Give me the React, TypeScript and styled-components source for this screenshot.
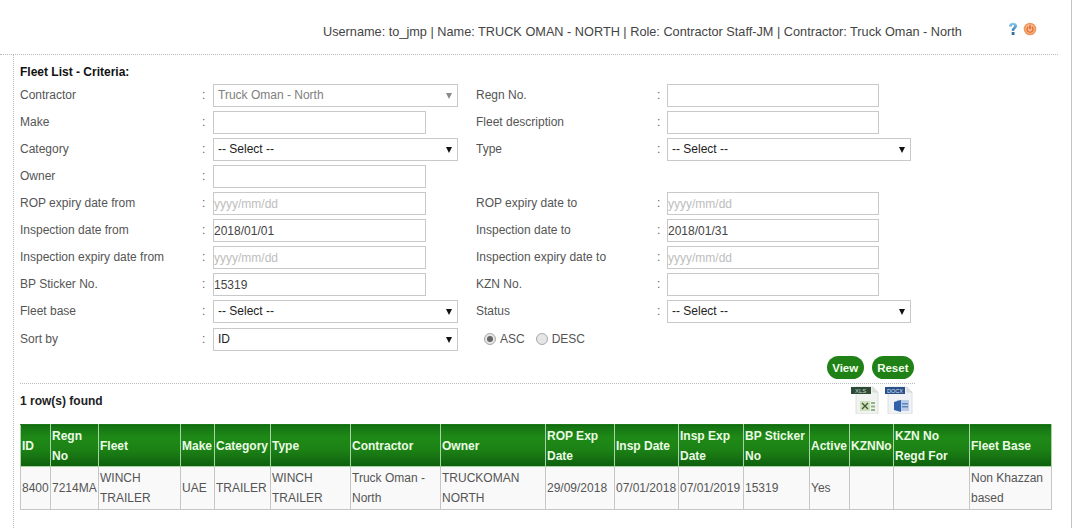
import React from 'react';
import styled, { createGlobalStyle } from 'styled-components';

const GlobalStyle = createGlobalStyle`
  html, body {
    margin: 0;
    padding: 0;
    background: #fff;
    font-family: 'Liberation Sans', Arial, sans-serif;
    font-size: 12px;
    overflow: hidden;
  }
`;

const Page = styled.div`
  width: 1071px;
  height: 528px;
  border-right: 1px solid #c4c4c4;
  overflow: hidden;
`;

const TopBar = styled.header`
  display: flex;
  align-items: center;
  height: 55px;
  width: 1058px;
  padding: 8px 0 0 323px;
  box-sizing: border-box;
  border-bottom: 1px dotted #bbb;
  color: #444;
  font-size: 12.72px;
`;

const UserInfo = styled.div`
  width: 684px;
  white-space: nowrap;
`;

const TopIcons = styled.div`
  display: flex;
  align-items: center;
  gap: 4px;
  margin-top: -4px;
`;

const Content = styled.main`
  margin-left: 13px;
  padding: 10px 0 0 6px;
  border-left: 1px dotted #bbb;
  height: 473px;
  box-sizing: border-box;
`;

const Heading = styled.h3`
  margin: 0;
  height: 16px;
  line-height: 15px;
  font-size: 12px;
  font-weight: bold;
  color: #111;
`;

const Criteria = styled.div`
  display: grid;
  grid-template-columns: 182px 11px 263px 181px 10px 1fr;
  grid-template-rows: repeat(9, 27px) 29px;
  align-items: center;
  width: 960px;
`;

const Label = styled.label`
  color: #555;
  font-size: 12px;
`;

const Colon = styled.span`
  color: #666;
`;

const TextInput = styled.input<{ $wide?: boolean }>`
  display: block;
  box-sizing: border-box;
  width: ${(p) => (p.$wide ? 212 : 213)}px;
  height: 23px;
  margin-top: 2px;
  padding: 0;
  border: 1px solid #c9c9c9;
  border-radius: 0;
  background: #fff;
  outline: none;
  color: #444;
  font: 12px 'Liberation Sans', Arial, sans-serif;

  &::placeholder {
    color: #bdbdbd;
  }
`;

const SelectWrap = styled.div<{ $muted?: boolean; $right?: boolean }>`
  position: relative;
  width: ${(p) => (p.$right ? 244 : 245)}px;
  height: 23px;
  margin-top: 2px;

  &::after {
    content: '';
    position: absolute;
    top: 9px;
    right: 6px;
    border-style: solid;
    border-width: 6px 3px 0 3px;
    border-color: ${(p) => (p.$muted ? '#8a8a8a' : '#111')} transparent transparent transparent;
  }
`;

const NativeSelect = styled.select<{ $muted?: boolean }>`
  appearance: none;
  display: block;
  box-sizing: border-box;
  width: 100%;
  height: 100%;
  padding: 0 4px 2px;
  border: 1px solid #c9c9c9;
  border-radius: 0;
  background: #fff;
  opacity: 1;
  color: ${(p) => (p.$muted ? '#808080' : '#222')};
  font: 12px 'Liberation Sans', Arial, sans-serif;
`;

const SortOptions = styled.div`
  grid-column: 4 / span 3;
  display: flex;
  align-items: center;
  padding-left: 8px;
  color: #555;
`;

const RadioMark = styled.span<{ $checked?: boolean }>`
  display: inline-block;
  box-sizing: border-box;
  position: relative;
  width: 12px;
  height: 12px;
  margin-right: 4px;
  border: 1px solid #a9a9a9;
  border-radius: 50%;
  background: #e6e6e6;

  &::after {
    content: '';
    display: ${(p) => (p.$checked ? 'block' : 'none')};
    position: absolute;
    top: 2px;
    left: 2px;
    width: 6px;
    height: 6px;
    border-radius: 50%;
    background: #666;
  }
`;

const RadioText = styled.span`
  margin-right: 11px;
`;

const Actions = styled.div`
  display: flex;
  justify-content: flex-end;
  gap: 8px;
  width: 895px;
  height: 28px;
  margin-top: 3px;
  padding-right: 1px;
  box-sizing: border-box;
  border-bottom: 1px dotted #bbb;
`;

const PillButton = styled.button`
  height: 23px;
  padding: 0 5.5px;
  border: 0;
  border-radius: 12px;
  background: #1f8116;
  color: #f4fff0;
  font: bold 11.5px 'Liberation Sans', Arial, sans-serif;
`;

const ResultBar = styled.div`
  display: flex;
  align-items: flex-start;
  justify-content: space-between;
  width: 895px;
  height: 40px;
`;

const RowCount = styled.div`
  margin-top: 10px;
  font-weight: bold;
  color: #222;
`;

const ExportIcons = styled.div`
  display: flex;
  gap: 6px;
  padding: 2px 2px 0 0;
`;

const FleetTable = styled.table`
  table-layout: fixed;
  border-collapse: collapse;
  width: 1031px;
  font-size: 12px;
`;

const Th = styled.th`
  height: 42px;
  padding: 0 1px;
  box-sizing: border-box;
  border: 1px solid #a9d3a3;
  border-top-color: #1a7a16;
  background: linear-gradient(to bottom, #147213 0%, #1f8a17 30%, #1c8115 60%, #0e5f0e 100%);
  color: #eafbe4;
  font-weight: bold;
  line-height: 20px;
  text-align: left;
  overflow: hidden;
`;

const Td = styled.td`
  height: 43px;
  padding: 0 1px;
  box-sizing: border-box;
  border: 1px solid #c6c6c6;
  background: #f9f9f9;
  color: #555;
  line-height: 20px;
  white-space: pre-line;
  overflow: hidden;
`;

const HelpIcon = () => (
  <svg width="12" height="14" viewBox="0 0 12 14">
    <defs>
      <linearGradient id="helpFill" x1="0" y1="0" x2="0" y2="1">
        <stop offset="0" stopColor="#8fd0f0" />
        <stop offset="1" stopColor="#2f79b5" />
      </linearGradient>
    </defs>
    <path
      d="M2 4.4C2.2 1.9 3.8.8 6 .8c2.4 0 4 1.2 4 3.2 0 1.5-.9 2.2-1.8 2.9-.6.5-.9.9-.9 1.8H4.7c0-1.5.4-2.3 1.3-3 .7-.6 1-1 1-1.6 0-.7-.4-1-1-1-.8 0-1.2.5-1.3 1.3z"
      fill="url(#helpFill)"
    />
    <rect x="4.7" y="10" width="2.8" height="3" fill="#2f6fa8" />
  </svg>
);

const PowerIcon = () => (
  <svg width="14" height="14" viewBox="0 0 14 14">
    <circle cx="7" cy="7" r="6.3" fill="#f0975c" />
    <circle cx="7" cy="7" r="4.8" fill="#f9cfae" opacity="0.55" />
    <path d="M5 5a3 3 0 1 0 4 0" fill="none" stroke="#e2662c" strokeWidth="1.2" />
    <path d="M7 3.5v3.4" stroke="#d9541e" strokeWidth="1.3" />
  </svg>
);

const XlsIcon = () => (
  <svg width="28" height="28" viewBox="0 0 28 28">
    <path d="M5 1h17l5 5v22H5z" fill="#f0f3ef" stroke="#dedede" />
    <path d="M22 1v5h5" fill="#dfe3df" stroke="#d6d6d6" />
    <rect x="0" y="1" width="20" height="7" fill="#2c4a36" />
    <text x="4" y="7" fontSize="6" fill="#c9d6c9" fontFamily="Liberation Sans, sans-serif">XLS</text>
    <rect x="9" y="15" width="10" height="10" fill="#cfe0bd" />
    <path d="M11 17l6 6M17 17l-6 6" stroke="#3c5a34" strokeWidth="1.4" />
    <rect x="20" y="16" width="4" height="2" fill="#8fb585" />
    <rect x="20" y="19.5" width="4" height="2" fill="#8fb585" />
    <rect x="20" y="23" width="4" height="2" fill="#8fb585" />
  </svg>
);

const DocxIcon = () => (
  <svg width="28" height="28" viewBox="0 0 28 28">
    <path d="M3 1h19l5 5v22H3z" fill="#f0f2f6" stroke="#dedede" />
    <path d="M22 1v5h5" fill="#dfe2e8" stroke="#d6d6d6" />
    <rect x="0" y="1" width="20" height="7" fill="#2a5088" />
    <text x="2" y="7" fontSize="5.5" fill="#d5e0f0" fontFamily="Liberation Sans, sans-serif">DOCX</text>
    <rect x="12" y="14" width="12" height="11" fill="#b9cbe6" />
    <path d="M9 16l7-2v12l-7-2z" fill="#2f62a8" />
    <rect x="17" y="17" width="6" height="1.5" fill="#5f86bd" />
    <rect x="17" y="20" width="6" height="1.5" fill="#5f86bd" />
  </svg>
);

const columns = [30, 48, 82, 34, 56, 80, 90, 105, 69, 64, 65, 66, 40, 44, 76, 82];

const headers = [
  'ID', 'Regn No', 'Fleet', 'Make', 'Category', 'Type', 'Contractor', 'Owner',
  'ROP Exp Date', 'Insp Date', 'Insp Exp Date', 'BP Sticker No', 'Active', 'KZNNo',
  'KZN No Regd For', 'Fleet Base',
];

const cells = [
  '8400', '7214MA', 'WINCH\nTRAILER', 'UAE', 'TRAILER', 'WINCH\nTRAILER', 'Truck Oman -\nNorth',
  'TRUCKOMAN\nNORTH', '29/09/2018', '07/01/2018', '07/01/2019', '15319', 'Yes', '', '',
  'Non Khazzan\nbased',
];

const App: React.FC = () => (
  <Page>
    <GlobalStyle />
    <TopBar>
      <UserInfo>
        Username: to_jmp | Name: TRUCK OMAN - NORTH | Role: Contractor Staff-JM | Contractor: Truck Oman - North
      </UserInfo>
      <TopIcons>
        <HelpIcon />
        <PowerIcon />
      </TopIcons>
    </TopBar>
    <Content>
      <Heading>Fleet List - Criteria:</Heading>
      <Criteria>
        <Label>Contractor</Label>
        <Colon>:</Colon>
        <SelectWrap $muted>
          <NativeSelect $muted disabled>
            <option>Truck Oman - North</option>
          </NativeSelect>
        </SelectWrap>
        <Label>Regn No.</Label>
        <Colon>:</Colon>
        <TextInput $wide />

        <Label>Make</Label>
        <Colon>:</Colon>
        <TextInput />
        <Label>Fleet description</Label>
        <Colon>:</Colon>
        <TextInput $wide />

        <Label>Category</Label>
        <Colon>:</Colon>
        <SelectWrap>
          <NativeSelect>
            <option>-- Select --</option>
          </NativeSelect>
        </SelectWrap>
        <Label>Type</Label>
        <Colon>:</Colon>
        <SelectWrap $right>
          <NativeSelect>
            <option>-- Select --</option>
          </NativeSelect>
        </SelectWrap>

        <Label>Owner</Label>
        <Colon>:</Colon>
        <TextInput />
        <span />
        <span />
        <span />

        <Label>ROP expiry date from</Label>
        <Colon>:</Colon>
        <TextInput placeholder="yyyy/mm/dd" />
        <Label>ROP expiry date to</Label>
        <Colon>:</Colon>
        <TextInput $wide placeholder="yyyy/mm/dd" />

        <Label>Inspection date from</Label>
        <Colon>:</Colon>
        <TextInput defaultValue="2018/01/01" />
        <Label>Inspection date to</Label>
        <Colon>:</Colon>
        <TextInput $wide defaultValue="2018/01/31" />

        <Label>Inspection expiry date from</Label>
        <Colon>:</Colon>
        <TextInput placeholder="yyyy/mm/dd" />
        <Label>Inspection expiry date to</Label>
        <Colon>:</Colon>
        <TextInput $wide placeholder="yyyy/mm/dd" />

        <Label>BP Sticker No.</Label>
        <Colon>:</Colon>
        <TextInput defaultValue="15319" />
        <Label>KZN No.</Label>
        <Colon>:</Colon>
        <TextInput $wide />

        <Label>Fleet base</Label>
        <Colon>:</Colon>
        <SelectWrap>
          <NativeSelect>
            <option>-- Select --</option>
          </NativeSelect>
        </SelectWrap>
        <Label>Status</Label>
        <Colon>:</Colon>
        <SelectWrap $right>
          <NativeSelect>
            <option>-- Select --</option>
          </NativeSelect>
        </SelectWrap>

        <Label>Sort by</Label>
        <Colon>:</Colon>
        <SelectWrap>
          <NativeSelect>
            <option>ID</option>
          </NativeSelect>
        </SelectWrap>
        <SortOptions>
          <RadioMark $checked />
          <RadioText>ASC</RadioText>
          <RadioMark />
          <RadioText>DESC</RadioText>
        </SortOptions>
      </Criteria>
      <Actions>
        <PillButton>View</PillButton>
        <PillButton>Reset</PillButton>
      </Actions>
      <ResultBar>
        <RowCount>1 row(s) found</RowCount>
        <ExportIcons>
          <XlsIcon />
          <DocxIcon />
        </ExportIcons>
      </ResultBar>
      <FleetTable>
        <colgroup>
          {columns.map((w, i) => (
            <col key={i} style={{ width: w }} />
          ))}
        </colgroup>
        <thead>
          <tr>
            {headers.map((h) => (
              <Th key={h}>{h}</Th>
            ))}
          </tr>
        </thead>
        <tbody>
          <tr>
            {cells.map((c, i) => (
              <Td key={i}>{c}</Td>
            ))}
          </tr>
        </tbody>
      </FleetTable>
    </Content>
  </Page>
);

export default App;
